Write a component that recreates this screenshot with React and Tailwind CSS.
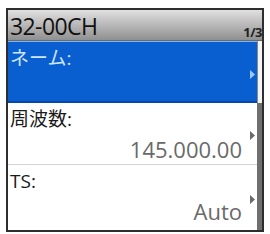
const font = { fontFamily: '"Open Sans", "Noto Sans CJK JP", sans-serif' }

function Tri({ color }) {
  return (
    <svg width="5" height="9" viewBox="0 0 5 9" className="absolute">
      <path d="M0 0 L5 4.5 L0 9 Z" fill={color} />
    </svg>
  )
}

function Row({ label, value, selected, tri, last }) {
  return (
    <div
      className={`relative h-[62px] ${selected ? 'bg-[#0a5fd0] border-t border-[#7fb6f0] border-b-2 border-b-[#0846a8]' : 'bg-white'} ${!selected && !last ? 'border-b border-[#d4d4d4]' : ''}`}
    >
      <div className={`absolute left-[2px] top-[4px] text-[19px] leading-[24px] ${selected ? 'text-[#cfe6ff]' : 'text-[#1a1a1a]'}`}>
        {label}
      </div>
      {value && (
        <div className="absolute right-[15px] top-[33px] text-[22px] leading-[26px] text-[#6a6a6a]">{value}</div>
      )}
      <div className={`absolute right-[7px] ${tri}`}>
        <Tri color={selected ? '#9cc8f5' : '#6a6a6a'} />
      </div>
    </div>
  )
}

export default function App() {
  return (
    <div className="w-[270px] h-[234px] bg-white pt-[8px] pl-[6px]" style={font}>
      <div className="w-[258px] h-[224px] border-2 border-[#2e2e2e] flex flex-col">
        <div className="relative h-[31px] bg-gradient-to-b from-[#e0e0e0] via-[#b8b8b8] to-[#909090] border-b border-[#6a6a6a]">
          <div className="absolute left-[2px] top-[3px] text-[23px] leading-[26px] text-[#111] tracking-[-0.6px]">32-00CH</div>
          <div className="absolute right-[0px] top-[15px] text-[13px] leading-[15px] font-bold text-[#222] tracking-[-0.5px]">1/3</div>
        </div>
        <div className="flex flex-1">
          <div className="flex-1 flex flex-col">
            <Row label="ネーム:" selected tri="top-[28px]" />
            <Row label="周波数:" value="145.000.00" tri="top-[28px]" />
            <Row label="TS:" value="Auto" tri="top-[30px]" last />
          </div>
          <div className="w-[5px] bg-[#6f6f6f] flex flex-col">
            <div className="h-[62px] bg-[#f4f4f4] border-l border-[#8a8a8a]" />
          </div>
        </div>
      </div>
    </div>
  )
}
